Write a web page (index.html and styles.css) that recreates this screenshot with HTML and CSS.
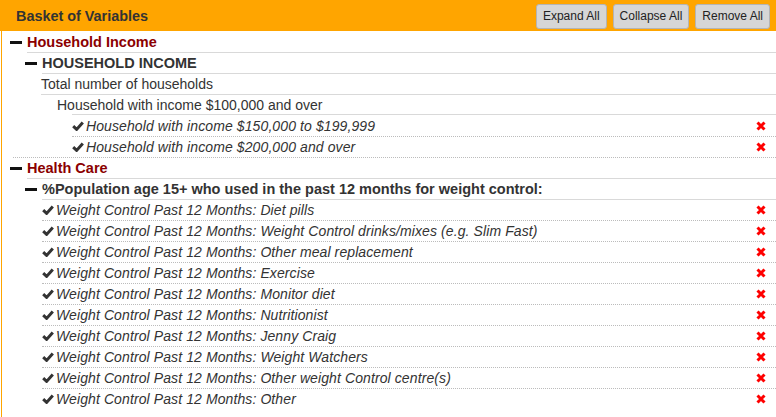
FILE: index.html
```html
<!DOCTYPE html>
<html>
<head>
<meta charset="utf-8">
<title>Basket of Variables</title>
<link rel="stylesheet" href="styles.css">
</head>
<body>
<div class="header">
  <div class="title">Basket of Variables</div>
  <div class="buttons">
    <button class="btn">Expand All</button>
    <button class="btn">Collapse All</button>
    <button class="btn">Remove All</button>
  </div>
</div>
<div class="panel">
  <div class="row r1"><span class="minus"></span><div class="line solid cat">Household Income</div></div>
  <div class="row r2"><span class="minus"></span><div class="line solid sub">HOUSEHOLD INCOME</div></div>
  <div class="row r3"><div class="line solid">Total number of households</div></div>
  <div class="row r4"><div class="line offset">Household with income $100,000 and over</div></div>
  <div class="row leaf-hh"><div class="line dotted"><svg class="check" viewBox="0 0 12 10"><path d="M1.2 5.2 L4.6 8.4 L10.8 1.6"/></svg><span class="it">Household with income $150,000 to $199,999</span><svg class="x" viewBox="0 0 10 10"><path d="M1.5 1.5 L8.5 8.5 M8.5 1.5 L1.5 8.5"/></svg></div></div>
  <div class="row leaf-hh-last"><div class="line dotted"><svg class="check" viewBox="0 0 12 10"><path d="M1.2 5.2 L4.6 8.4 L10.8 1.6"/></svg><span class="it">Household with income $200,000 and over</span><svg class="x" viewBox="0 0 10 10"><path d="M1.5 1.5 L8.5 8.5 M8.5 1.5 L1.5 8.5"/></svg></div></div>
  <div class="row r1"><span class="minus"></span><div class="line solid cat">Health Care</div></div>
  <div class="row r2"><span class="minus"></span><div class="line solid sub">%Population age 15+ who used in the past 12 months for weight control:</div></div>
  <div class="row leaf"><div class="line dotted"><svg class="check" viewBox="0 0 12 10"><path d="M1.2 5.2 L4.6 8.4 L10.8 1.6"/></svg><span class="it">Weight Control Past 12 Months: Diet pills</span><svg class="x" viewBox="0 0 10 10"><path d="M1.5 1.5 L8.5 8.5 M8.5 1.5 L1.5 8.5"/></svg></div></div>
  <div class="row leaf"><div class="line dotted"><svg class="check" viewBox="0 0 12 10"><path d="M1.2 5.2 L4.6 8.4 L10.8 1.6"/></svg><span class="it">Weight Control Past 12 Months: Weight Control drinks/mixes (e.g. Slim Fast)</span><svg class="x" viewBox="0 0 10 10"><path d="M1.5 1.5 L8.5 8.5 M8.5 1.5 L1.5 8.5"/></svg></div></div>
  <div class="row leaf"><div class="line dotted"><svg class="check" viewBox="0 0 12 10"><path d="M1.2 5.2 L4.6 8.4 L10.8 1.6"/></svg><span class="it">Weight Control Past 12 Months: Other meal replacement</span><svg class="x" viewBox="0 0 10 10"><path d="M1.5 1.5 L8.5 8.5 M8.5 1.5 L1.5 8.5"/></svg></div></div>
  <div class="row leaf"><div class="line dotted"><svg class="check" viewBox="0 0 12 10"><path d="M1.2 5.2 L4.6 8.4 L10.8 1.6"/></svg><span class="it">Weight Control Past 12 Months: Exercise</span><svg class="x" viewBox="0 0 10 10"><path d="M1.5 1.5 L8.5 8.5 M8.5 1.5 L1.5 8.5"/></svg></div></div>
  <div class="row leaf"><div class="line dotted"><svg class="check" viewBox="0 0 12 10"><path d="M1.2 5.2 L4.6 8.4 L10.8 1.6"/></svg><span class="it">Weight Control Past 12 Months: Monitor diet</span><svg class="x" viewBox="0 0 10 10"><path d="M1.5 1.5 L8.5 8.5 M8.5 1.5 L1.5 8.5"/></svg></div></div>
  <div class="row leaf"><div class="line dotted"><svg class="check" viewBox="0 0 12 10"><path d="M1.2 5.2 L4.6 8.4 L10.8 1.6"/></svg><span class="it">Weight Control Past 12 Months: Nutritionist</span><svg class="x" viewBox="0 0 10 10"><path d="M1.5 1.5 L8.5 8.5 M8.5 1.5 L1.5 8.5"/></svg></div></div>
  <div class="row leaf"><div class="line dotted"><svg class="check" viewBox="0 0 12 10"><path d="M1.2 5.2 L4.6 8.4 L10.8 1.6"/></svg><span class="it">Weight Control Past 12 Months: Jenny Craig</span><svg class="x" viewBox="0 0 10 10"><path d="M1.5 1.5 L8.5 8.5 M8.5 1.5 L1.5 8.5"/></svg></div></div>
  <div class="row leaf"><div class="line dotted"><svg class="check" viewBox="0 0 12 10"><path d="M1.2 5.2 L4.6 8.4 L10.8 1.6"/></svg><span class="it">Weight Control Past 12 Months: Weight Watchers</span><svg class="x" viewBox="0 0 10 10"><path d="M1.5 1.5 L8.5 8.5 M8.5 1.5 L1.5 8.5"/></svg></div></div>
  <div class="row leaf"><div class="line dotted"><svg class="check" viewBox="0 0 12 10"><path d="M1.2 5.2 L4.6 8.4 L10.8 1.6"/></svg><span class="it">Weight Control Past 12 Months: Other weight Control centre(s)</span><svg class="x" viewBox="0 0 10 10"><path d="M1.5 1.5 L8.5 8.5 M8.5 1.5 L1.5 8.5"/></svg></div></div>
  <div class="row leaf"><div class="line last"><svg class="check" viewBox="0 0 12 10"><path d="M1.2 5.2 L4.6 8.4 L10.8 1.6"/></svg><span class="it">Weight Control Past 12 Months: Other</span><svg class="x" viewBox="0 0 10 10"><path d="M1.5 1.5 L8.5 8.5 M8.5 1.5 L1.5 8.5"/></svg></div></div>
</div>
</body>
</html>
```
FILE: styles.css
```css
html, body {
  margin: 0;
  padding: 0;
  background: #fff;
  font-family: "Liberation Sans", Arial, sans-serif;
  color: #333;
}
.header {
  height: 31px;
  background: #ffa500;
  display: flex;
  align-items: center;
  justify-content: space-between;
  padding: 0 6px 0 16px;
}
.title {
  font-weight: bold;
  font-size: 14.4px;
  color: #333;
}
.buttons {
  display: flex;
  gap: 6px;
  padding-top: 1px;
}
.btn {
  height: 25px;
  padding: 0 6px;
  font-family: "Liberation Sans", Arial, sans-serif;
  font-size: 12px;
  color: #222;
  background: #d6d6d6;
  border: 1px solid #b4b4b4;
  border-radius: 3px;
}
.panel {
  margin-left: 1px;
  border-left: 1px solid #ffa500;
  padding-top: 1px;
  height: 385px;
  font-size: 14px;
}
.row {
  display: flex;
  align-items: center;
}
.line {
  flex: 1;
  display: flex;
  align-items: center;
  height: 20px;
  line-height: 20px;
  white-space: nowrap;
}
.solid { border-bottom: 1px solid #d9d9d9; }
.dotted { border-bottom: 1px dotted #bcbcbc; }
.last { border-bottom: 1px solid transparent; }
.offset {
  border-bottom: 1px solid transparent;
  background: linear-gradient(#d9d9d9, #d9d9d9) no-repeat 15px 100% / calc(100% - 15px) 1px;
}
.minus {
  width: 12px;
  height: 3px;
  background: #111;
  margin-right: 5px;
}
.r1 { margin-left: 8px; }
.r2 { margin-left: 23px; }
.r3 { margin-left: 39px; }
.r4 { margin-left: 55px; }
.leaf-hh { margin-left: 70px; }
.leaf-hh-last { margin-left: 11px; }
.leaf-hh-last .line { padding-left: 59px; }
.leaf { margin-left: 40px; }
.cat {
  font-weight: bold;
  font-size: 14.5px;
  color: #8b0000;
}
.sub {
  font-weight: bold;
  font-size: 14.5px;
  color: #333;
}
.it {
  font-style: italic;
  color: #333;
  letter-spacing: 0.1px;
}
.check {
  width: 12px;
  height: 10px;
  margin-right: 2px;
  flex: none;
}
.check path {
  fill: none;
  stroke: #333;
  stroke-width: 3;
}
.x {
  width: 10px;
  height: 10px;
  margin-left: auto;
  margin-right: 10px;
  flex: none;
}
.x path {
  stroke: #f00;
  stroke-width: 3;
  fill: none;
}
```
